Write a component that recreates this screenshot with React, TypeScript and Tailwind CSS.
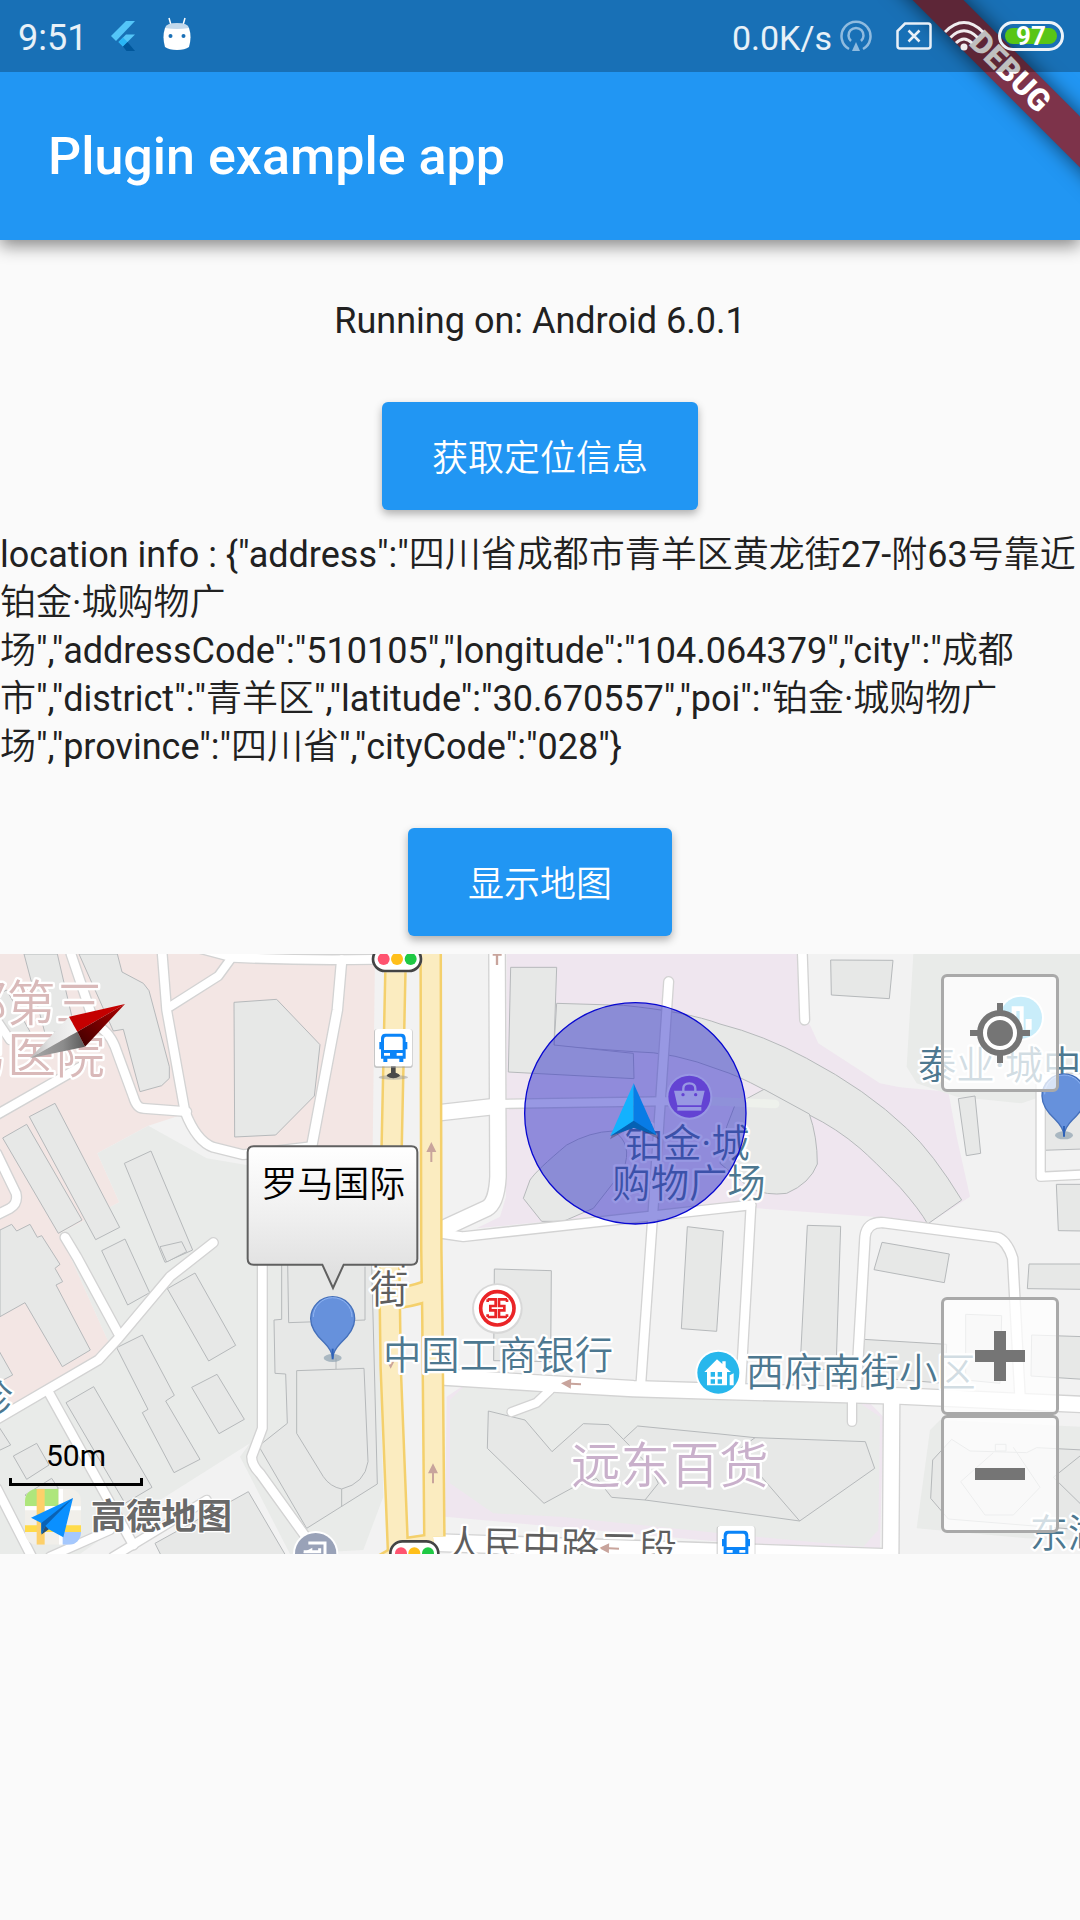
import React from "react";

const CJK = "font-[Roboto,'Noto_Sans_CJK_SC_DemiLight','Noto_Sans_CJK_SC_Light','Noto_Sans_CJK_SC',sans-serif]";

const LOCATION_INFO = [
  'location info : {"address":"四川省成都市青羊区黄龙街27-附63号靠近',
  "铂金·城购物广",
  '场","addressCode":"510105","longitude":"104.064379","city":"成都',
  '市","district":"青羊区","latitude":"30.670557","poi":"铂金·城购物广',
  '场","province":"四川省","cityCode":"028"}',
].join("\n");

const AREAS: [string, string][] = [
  ["#f3e6e4", "0,12 1125,12 1118,600 720,600 630,590 560,490 445,527 292,610 358,757 180,850 325,1175 40,1360 0,1400"],
  ["#e9ebe9", "445,527 620,625 740,645 1125,640 1150,1640 1090,1800 870,1812 720,1520 750,1480 370,1720 240,1812 0,1812 0,1400 325,1175 180,850 358,757 292,610"],
  ["#f3e6e4", "0,1100 75,1058 187,1250 271,1200 188,995 168,900 185,890 325,1175 295,1225 0,1400"],
  ["#efe6ef", "1520,12 2390,12 2400,200 2430,225 2455,280 2640,400 2700,412 2845,425 2870,560 2910,740 2780,825 2620,800 2270,775 1900,790 1430,835 1500,800 1518,740"],
  ["#efe6ef", "1340,1340 1400,1300 2600,1350 2650,1400 2640,1800 2160,1775 1335,1700"],
  ["#e9ebe9", "1350,1350 1390,1310 2580,1360 2640,1400 2635,1740 2590,1790 2160,1750 1680,1700 1480,1690 1350,1600"],
  ["#e9ebe9", "2740,12 3240,12 3240,400 3065,460 2870,440 2750,400 2720,350"],
  ["#e9ebe9", "2790,1440 2820,1410 3240,1430 3240,1770 3080,1765 2750,1735"],
];

const BUILDINGS = [
  "72,12 172,12 225,240 135,250",
  "0,130 20,120 90,245 30,270 0,220",
  "237,12 352,12 366,66 430,100 447,122 508,350 508,385 485,407 420,425 370,238 340,243",
  "702,157 830,148 960,284 943,438 827,555 704,561",
  "8,564 80,523 246,810 175,850",
  "88,500 165,460 359,832 287,869",
  "373,640 453,603 578,900 495,937",
  "305,902 375,867 449,1028 383,1065",
  "0,840 35,823 50,843 90,823 112,862 125,857 180,943 165,955 188,995 168,1005 271,1200 187,1250 75,1058 0,1100",
  "-10,1190 38,1275 -10,1300",
  "480,890 545,875 560,905 500,936",
  "502,1016 585,969 707,1186 626,1233",
  "350,1193 427,1155 523,1336 497,1353 600,1528 522,1568 427,1388 444,1378",
  "198,1358 281,1310 456,1612 375,1660",
  "575,1312 651,1273 733,1408 657,1451",
  "40,1518 110,1480 147,1545 80,1588",
  "-10,1420 32,1485 -10,1505",
  "75,1635 155,1585 175,1615 100,1660",
  "465,1780 745,1625 865,1830 490,1830",
  "845,940 845,1108 822,1110 825,1270 857,1272 862,1420 776,1488 920,1735 1132,1602 1115,940",
  "1532,52 1670,52 1662,285 1900,310 1902,386 1525,366",
  "2492,30 2679,31 2668,146 2494,135",
  "2875,446 2925,438 2942,610 2899,617",
  "3135,480 3250,470 3250,597 3127,601",
  "3169,703 3250,703 3250,843 3175,842",
  "2422,826 2522,829 2508,1260 2400,1255",
  "2646,877 2848,912 2833,998 2622,959",
  "3087,942 3250,942 3250,1018 3082,1016",
  "2590,1168 2840,1183 2835,1300 2588,1280",
  "2897,1093 3005,1097 3000,1300 2897,1290",
  "3095,1155 3250,1160 3250,1288 3093,1278",
  "1483,957 1654,962 1652,1235 1481,1232",
  "2062,830 2170,843 2150,1144 2044,1136",
  "1465,1383 1575,1410 1656,1505 1750,1421 1827,1424 1870,1468 1913,1428 2160,1452 2265,1463 2596,1475 2624,1555 2399,1713 2160,1680 1935,1650 1835,1642 1790,1585 1720,1612 1632,1660 1462,1495",
  "2798,1530 2855,1468 2910,1503 3080,1508 3110,1493 3250,1500 3250,1740 2845,1707 2792,1645",
];

const BUILDING_CURVES = [
  "M1670 160L1870 166Q2060 185 2160 222Q2290 255 2420 325Q2600 420 2720 535Q2800 610 2885 750L2783 822Q2760 780 2700 712Q2620 630 2580 595Q2510 535 2428 495L2290 418Q2210 375 2160 360Q2020 305 1900 305L1662 288Z",
  "M1570 745L1590 690Q1610 660 1700 585Q1770 545 1840 543Q1900 580 1870 660L1780 775L1690 814H1625Z",
  "M2160 640L2180 530L2205 465L2292 418L2428 492Q2452 560 2452 642Q2430 700 2360 730Q2300 738 2250 715Z",
];

const DETAIL_LINES = [
  "M863 940L866 1118L1095 1110V950",
  "M890 1262L1092 1255L1104 1535Q1095 1600 1025 1617Q990 1610 970 1580L890 1450Z",
  "M1025 1617V1670M1008 1225V1257",
  "M1870 1468L1950 1550L1975 1600L1935 1650M2265 1463L2215 1500L2399 1713",
  "M2980 1508L2882 1595L2955 1695H3040L3120 1612L3040 1492M2986 1483H3018V1503H2986ZM3250 1510L3160 1582L3250 1670",
];

const ROADS: [string, number][] = [
  ["M213 12L285 225Q325 240 345 290L400 440Q410 475 430 475L560 485", 26],
  ["M485 -10L500 180L555 485Q590 575 640 592L730 614L935 590", 26],
  ["M-20 500L240 352", 26],
  ["M-10 210L30 270", 24],
  ["M510 170L655 78L690 30", 24],
  ["M580 -10L700 22Q900 32 1120 28", 26],
  ["M1025 30L1012 180L935 590", 28],
  ["M-10 610L48 730Q55 760 30 775L-10 795", 26],
  ["M195 862L230 920L355 1150", 26],
  ["M640 878L510 980L355 1165L295 1230L-10 1408", 26],
  ["M145 1325L400 1785", 26],
  ["M-10 1615L100 1830", 26],
  ["M620 1650L340 1820M330 1740L150 1820", 24],
  ["M787 940V1435L755 1520Q755 1545 780 1570L960 1820", 26],
  ["M1320 488L1480 470", 46],
  ["M1490 462L2100 452", 24],
  ["M1491 -20L1494 680Q1490 760 1460 775L1320 840", 46],
  ["M1320 850L1390 860L2160 775L2253 765", 26],
  ["M2253 765L2240 1000L2222 1310", 26],
  ["M2006 95L1985 400L1958 800L1922 1310", 26],
  ["M1310 1280L1660 1302L1900 1316L2160 1324L2700 1338L3260 1364", 46],
  ["M1650 1320L1610 1358L1535 1386", 24],
  ["M2406 -20L2414 210", 26],
  ["M2568 1330L2595 860Q2600 815 2650 818L2990 862Q3020 870 3038 925L3060 1340", 28],
  ["M3260 385H3122V680L3260 673", 24],
  ["M2675 1340L2672 1830", 46],
  ["M2556 1350V1415", 24],
  ["M1310 1778L2160 1806L2650 1822", 50],
];

const YELLOW_ROADS = [
  "M1188 -20L1175 590L1168 950L1172 1250L1195 1830",
  "M1292 -20L1294 900L1297 1100L1303 1760",
  "M1172 1045Q1220 1045 1290 1020",
  "M1195 1798L1302 1782",
  "M1200 1815L1120 1860",
];

function TrafficLight({ x, y }: { x: number; y: number }) {
  return (
    <g transform={`translate(${x} ${y})`}>
      <rect x="-76" y="-40" width="152" height="80" rx="40" fill="#fff" />
      <rect x="-72" y="-36" width="144" height="72" rx="36" fill="#fff" stroke="#444" strokeWidth="8" />
      <circle cx="-40" r="18" fill="#ff5470" />
      <circle r="18" fill="#ffbf1a" />
      <circle cx="41" r="18" fill="#1fc944" />
    </g>
  );
}

function BusStop({ x, y, pole }: { x: number; y: number; pole?: boolean }) {
  return (
    <g transform={`translate(${x} ${y})`}>
      {pole && (
        <>
          <ellipse cy="88" rx="44" ry="7" fill="#999" opacity=".5" />
          <path d="M-7 50H7V74Q20 78 20 84Q0 98 -20 84Q-20 78 -7 74Z" fill="#4a4a4a" />
        </>
      )}
      <rect x="-58" y="-56" width="116" height="116" rx="8" fill="#999" opacity=".5" />
      <rect x="-55" y="-57" width="111" height="112" rx="8" fill="#fff" />
      <path
        fillRule="evenodd"
        fill="#0a84f8"
        d="M-24 -43H24Q36 -43 37 -30V-18H42V4H37V32H30V42H18V32H-18V42H-30V32H-37V4H-42V-18H-37V-30Q-36 -43 -24 -43ZM-22 -34Q-28 -34 -28 -26V6H28V-26Q28 -34 22 -34ZM-28 15V23H-10V15ZM10 15V23H28V15Z"
      />
    </g>
  );
}

function MapPin({ x, y }: { x: number; y: number }) {
  return (
    <g transform={`translate(${x} ${y})`}>
      <ellipse cy="118" rx="27" ry="12" fill="#8fa3b0" opacity=".7" />
      <path
        d="M0 118Q-2 95 -25 72Q-66 35 -66 0A66 66 0 0 1 66 0Q66 35 25 72Q2 95 0 118Z"
        fill="#6691dc"
        stroke="#4570ba"
        strokeWidth="4"
      />
      <path d="M-58 -5A58 58 0 0 1 58 -5" fill="none" stroke="#8fb4f2" strokeWidth="3" />
      <path d="M0 90V122" stroke="#2e62b8" strokeWidth="6" />
    </g>
  );
}

function DirectionArrow({ x, y, turn }: { x: number; y: number; turn: number }) {
  return (
    <path
      transform={`translate(${x} ${y}) rotate(${turn})`}
      d="M0 -30L15 0H3V30H-3V0H-15Z"
      fill="#c8a49c"
    />
  );
}

function CityMap() {
  return (
    <svg
      className="block h-[600px] w-full"
      viewBox="0 12 3240 1800"
      preserveAspectRatio="xMidYMid slice"
      role="img"
      aria-label="Map"
    >
      <defs>
        <linearGradient id="bubble" x1="0" y1="0" x2="0" y2="1">
          <stop offset="0" stopColor="#ffffff" />
          <stop offset=".5" stopColor="#efefef" />
          <stop offset="1" stopColor="#dcdcdc" />
        </linearGradient>
        <linearGradient id="silver" x1="0" y1="0" x2="1" y2="0">
          <stop offset="0" stopColor="#b4b4b4" />
          <stop offset=".4" stopColor="#e2e2e2" />
          <stop offset="1" stopColor="#f4f4f4" />
        </linearGradient>
        <linearGradient id="steel" x1="0" y1="0" x2="1" y2="0">
          <stop offset="0" stopColor="#a8a8a8" />
          <stop offset=".6" stopColor="#8c8c8c" />
          <stop offset="1" stopColor="#5a5a5a" />
        </linearGradient>
        <linearGradient id="darkred" x1="1" y1="0" x2="0" y2="1">
          <stop offset="0" stopColor="#b00000" />
          <stop offset="1" stopColor="#3c0000" />
        </linearGradient>
      </defs>

      <rect y="12" width="3240" height="1800" fill="#f2f2f2" />
      {AREAS.map(([fill, points]) => (
        <polygon key={points} points={points} fill={fill} />
      ))}
      <g fill="#e7e8e7" stroke="#b6b9bb" strokeWidth="3">
        {BUILDING_CURVES.map((d) => (
          <path key={d} d={d} />
        ))}
        {BUILDINGS.map((points) => (
          <polygon key={points} points={points} />
        ))}
      </g>
      <g fill="none" stroke="#b6b9bb" strokeWidth="3">
        {DETAIL_LINES.map((d) => (
          <path key={d} d={d} />
        ))}
      </g>
      <path d="M2100 452L2325 462" stroke="#eef1ec" strokeWidth="26" strokeLinecap="round" />

      <g fill="none" stroke="#d3d3d3" strokeLinecap="round" strokeLinejoin="round">
        {ROADS.map(([d, w]) => (
          <path key={d} d={d} strokeWidth={w + 8} />
        ))}
      </g>
      <g fill="none" stroke="#ffffff" strokeLinecap="round" strokeLinejoin="round">
        {ROADS.map(([d, w]) => (
          <path key={d} d={d} strokeWidth={w} />
        ))}
      </g>
      <g fill="none" stroke="#f4d06c" strokeWidth="68">
        {YELLOW_ROADS.map((d) => (
          <path key={d} d={d} />
        ))}
      </g>
      <g fill="none" stroke="#fbecc0" strokeWidth="53">
        {YELLOW_ROADS.map((d) => (
          <path key={d} d={d} />
        ))}
      </g>

      <DirectionArrow x={1294} y={606} turn={0} />
      <DirectionArrow x={1299} y={1570} turn={0} />
      <DirectionArrow x={1172} y={1226} turn={180} />
      <DirectionArrow x={1713} y={1301} turn={-87} />
      <DirectionArrow x={1827} y={1795} turn={-88} />
      <path d="M1478 14H1505M1491 14V45" stroke="#c8a49c" strokeWidth="7" />

      <TrafficLight x={1191} y={27} />
      <TrafficLight x={1243} y={1810} />
      <BusStop x={1180} y={294} pole />
      <BusStop x={2208} y={1785} />

      <g stroke="#fff" strokeWidth="14" strokeLinejoin="round" paintOrder="stroke">
        <g fill="#d9b9b9" fontSize="146">
          <text x="-126" y="214">都第三</text>
          <text x="-124" y="368">男医院</text>
        </g>
        <text x="1714" y="1600" fontSize="148" fill="#c9b0cb">远东百货</text>
        <g fill="#4d7890" fontSize="115">
          <text x="1149" y="1257">中国工商银行</text>
          <text x="2237" y="1308">西府南街小区</text>
          <text x="1874" y="622">铂金·城</text>
          <text x="1837" y="742">购物广场</text>
          <text x="2754" y="386">泰业·城中心</text>
          <text x="3089" y="1790">东湖</text>
          <text x="-76" y="1388">诊</text>
        </g>
        <g fill="#5e5e5e" fontSize="116">
          <text x="1110" y="942">西</text>
          <text x="1110" y="1058">街</text>
          <text x="1334" y="1824" transform="rotate(1 1334 1824)">人民中路二段</text>
        </g>
      </g>

      <g>
        <circle cx="1492" cy="1076" r="76" fill="#d8d8d8" />
        <circle cx="1492" cy="1075" r="70" fill="#fff" />
        <circle cx="1492" cy="1075" r="50" fill="#fff" stroke="#ea2427" strokeWidth="11" />
        <path
          d="M1463 1048H1487V1068H1471V1081H1487V1101H1463M1521 1048H1497V1068H1513V1081H1497V1101H1521M1463 1048V1056M1521 1048V1056M1463 1101V1093M1521 1101V1093"
          fill="none"
          stroke="#ea2427"
          strokeWidth="8"
        />
      </g>
      <g transform="translate(2155 1268)">
        <circle r="69" fill="#fff" />
        <circle r="63" fill="#28b7ec" />
        <path
          fillRule="evenodd"
          fill="#fff"
          d="M-4 -40L12 -26V-34H22V-16L38 -2H26V38H-34V-2H-42ZM-23 -2V12H-10V-2ZM-2 -2V12H11V-2ZM-23 20V33H-10V20ZM-2 20V33H11V20Z"
        />
        <path d="M34 38V8L46 2V38Z" fill="#fff" />
      </g>
      <g transform="translate(3063 203)">
        <circle r="69" fill="#fff" />
        <circle r="63" fill="#28b7ec" />
        <path d="M-28 36V-34H8V36H-4V-20H-14V36ZM14 36V4H32V36Z" fill="#fff" />
      </g>
      <g transform="translate(2068 440)">
        <circle r="69" fill="#fff" />
        <circle r="63" fill="#9a5ce0" />
        <path d="M-46 -18H46L36 26H-36Z" fill="#fff" />
        <path d="M-36 31H36V42H-36Z" fill="#fff" />
        <path d="M-18 -10V-24Q-18 -40 0 -40Q18 -40 18 -24V-10" fill="none" stroke="#fff" strokeWidth="7" />
        <circle cx="-19" cy="-6" r="5" fill="#9a5ce0" />
        <circle cx="19" cy="-6" r="5" fill="#9a5ce0" />
      </g>
      <g transform="translate(947 1811)">
        <circle r="68" fill="#fff" />
        <circle r="62" fill="#99a2b8" />
        <path d="M-22 -32H28V20M-36 -6H12V-16" fill="none" stroke="#fff" strokeWidth="9" />
        <path d="M-38 -3L-10 -18V-3Z" fill="#fff" />
      </g>

      <circle cx="1906" cy="490" r="332" fill="#2828c4" fillOpacity=".48" stroke="#0808d0" strokeWidth="4" />
      <g>
        <path d="M1901 412L1976 568L1901 528L1830 568Z" fill="#000" opacity=".25" />
        <path d="M1901 400L1831 558L1901 515Z" fill="#13b2fe" />
        <path d="M1901 400L1970 556L1901 515Z" fill="#087ce6" />
        <path d="M1831 558L1901 512L1970 556L1901 534Z" fill="#0561b4" />
      </g>

      <MapPin x={998} y={1106} />
      <MapPin x={3192} y={438} />

      <path
        d="M761 589H1234Q1252 589 1252 607V926Q1252 944 1234 944H1031L999 1014L967 944H761Q743 944 743 926V607Q743 589 761 589Z"
        fill="url(#bubble)"
        stroke="#606060"
        strokeWidth="6"
      />
      <text x="784" y="742" fontSize="108" fill="#000">罗马国际</text>

      <path d="M207 200L90 325L232 245Z" fill="url(#silver)" />
      <path d="M232 245L90 325L255 290Z" fill="url(#steel)" />
      <path d="M207 200L375 162L232 245Z" fill="#c40000" />
      <path d="M232 245L375 162L255 290Z" fill="url(#darkred)" />

      <g>
        <clipPath id="tile">
          <rect x="75" y="1616" width="168" height="168" rx="36" />
        </clipPath>
        <g clipPath="url(#tile)">
          <rect x="75" y="1616" width="168" height="168" fill="#f1efea" />
          <path d="M75 1616H175V1668H75Z" fill="#aee67c" />
          <path d="M183 1616V1784M75 1675H243" stroke="#fff" strokeWidth="12" />
          <path d="M75 1736H243" stroke="#ffdb4a" strokeWidth="20" />
          <path d="M122 1616V1784" stroke="#fdd06a" strokeWidth="24" />
          <path d="M188 1784V1746H243V1784Z" fill="#a5c8fd" />
        </g>
        <path d="M219 1644L93 1703L124 1719V1752L146 1738L190 1762Z" fill="#0a90ff" />
        <path d="M219 1644L124 1719V1752L136 1728Z" fill="#0a62b4" />
        <path d="M136 1728L146 1738L124 1754Z" fill="#2b4f70" />
      </g>
      <text
        x="272"
        y="1738"
        className="font-['Noto_Sans_CJK_SC',sans-serif]"
        fontSize="106"
        fontWeight="700"
        fill="#696969"
        stroke="#fff"
        strokeWidth="8"
        paintOrder="stroke"
        strokeLinejoin="round"
      >
        高德地图
      </text>
    </svg>
  );
}

const MAP_BUTTON =
  "flex size-[118px] items-center justify-center rounded-md border-3 border-[#a9a9a9] bg-white/75";

function MapPanel() {
  return (
    <section className="relative w-full overflow-hidden">
      <CityMap />
      <div className="absolute bottom-[68px] left-[9px] flex w-[134px] flex-col items-center text-[30px] leading-[36px] text-black">
        <span className="pb-1">50m</span>
        <span className="h-2 w-full border-x-3 border-b-3 border-black" />
      </div>
      <button type="button" aria-label="My location" className={`${MAP_BUTTON} absolute top-5 right-[21px]`}>
        <svg viewBox="0 0 60 60" className="size-[60px]">
          <circle cx="30" cy="30" r="20" fill="#fff" stroke="#757575" strokeWidth="6" />
          <circle cx="30" cy="30" r="13" fill="#757575" />
          <path d="M30 0V9M30 51V60M0 30H9M51 30H60" stroke="#757575" strokeWidth="6" />
        </svg>
      </button>
      <div className="absolute right-[21px] bottom-[21px] flex flex-col">
        <button type="button" aria-label="Zoom in" className={MAP_BUTTON}>
          <svg viewBox="0 0 50 50" className="size-[50px]">
            <path d="M0 25H50M25 0V50" stroke="#757575" strokeWidth="12" />
          </svg>
        </button>
        <button type="button" aria-label="Zoom out" className={MAP_BUTTON}>
          <svg viewBox="0 0 50 50" className="size-[50px]">
            <path d="M0 25H50" stroke="#757575" strokeWidth="12" />
          </svg>
        </button>
      </div>
    </section>
  );
}

function StatusBar() {
  return (
    <div className="relative z-20 flex h-18 items-center justify-between bg-black/25 pr-4 pl-[18px] leading-[48px] text-white/90">
      <div className="flex items-center gap-6">
        <span className="pt-1 text-[36px]">9:51</span>
        <svg viewBox="0 0 24 30" className="h-[30px] w-6">
          <path d="M15 0H24L5 20L0 15Z" fill="#54c5f8" />
          <path d="M15 13.500H24L12 25.500L7.500 21Z" fill="#54c5f8" />
          <path d="M7.500 21L12 16.500L16.500 21L12 25.500Z" fill="#29b6f6" />
          <path d="M12 25.500L16.500 21L24 30H15.500Z" fill="#01579b" />
        </svg>
        <svg viewBox="0 0 28 34" className="mb-1 ml-1 h-[34px] w-7">
          <path d="M6 1L8 8M22 1L20 8" stroke="#fff" strokeWidth="1.500" />
          <path d="M2 11Q14 8 26 11Q29 20 26 30Q22 33 14 33Q6 33 2 30Q-1 20 2 11Z" fill="#fff" />
          <path d="M2 11Q3 6 14 6Q25 6 26 11Q14 13 2 11Z" fill="#c3d9ec" />
          <circle cx="7.500" cy="19" r="2" fill="#1a70b6" />
          <circle cx="20.500" cy="19" r="2" fill="#1a70b6" />
        </svg>
      </div>
      <div className="flex items-center">
        <span className="pt-1 pr-2 text-[34px]">0.0K/s</span>
        <svg viewBox="0 0 32 32" className="size-8" fill="none" stroke="#8fbbdf" strokeWidth="2.500">
          <path d="M9 29A14.500 14.500 0 1 1 23 29" />
          <path d="M11 21A7.500 7.500 0 1 1 21 21" />
          <path d="M16 22L20 31H12Z" fill="#8fbbdf" stroke="none" />
        </svg>
        <svg viewBox="0 0 36 28" className="ml-6 h-7 w-9" fill="none" stroke="#e8f0f8">
          <path d="M9 1.500H32Q34.500 1.500 34.500 4V24Q34.500 26.500 32 26.500H4Q1.500 26.500 1.500 24V9Z" strokeWidth="2.500" />
          <path d="M12.500 8.500L23.500 19.500M23.500 8.500L12.500 19.500" strokeWidth="2.500" />
        </svg>
        <svg viewBox="0 0 40 30" className="ml-3 h-[30px] w-10" fill="none" stroke="#f0ecee" strokeWidth="3">
          <path d="M1 11Q20 -8 39 11" />
          <path d="M6.500 16.500Q20 3 33.500 16.500" />
          <path d="M12 22Q20 14 28 22" />
          <circle cx="20" cy="26" r="3.500" fill="#f0ecee" stroke="none" />
        </svg>
        <div className="ml-[14px] flex h-[30px] w-[66px] rounded-full border-3 border-[#edf3f9] p-1">
          <span className="flex flex-1 items-center justify-center rounded-full bg-[#58c516] text-[26px] leading-none font-bold text-white">
            97
          </span>
        </div>
      </div>
    </div>
  );
}

const RAISED =
  "h-[108px] rounded-md bg-[#2196f3] px-[50px] pt-1.5 text-white shadow-[0_4px_8px_rgba(0,0,0,0.3)]";

export default function App() {
  return (
    <div className={`min-h-screen bg-[#fafafa] text-[36px] leading-[48px] text-[#212121] ${CJK}`}>
      <header className="relative z-10 bg-[#2196f3] shadow-[0_6px_16px_rgba(0,0,0,0.45)]">
        <div className="pointer-events-none absolute top-0 right-0 z-10 size-[240px] overflow-hidden">
          <div className="absolute top-[54px] -right-[80px] h-9 w-[300px] rotate-45 bg-[#7d334a] text-center text-[31px] leading-[36px] font-black text-white shadow-[0_0_20px_rgba(0,0,0,0.6)]">
            DEBUG
          </div>
        </div>
        <StatusBar />
        <div className="flex h-[168px] items-center px-12 pt-0.5">
          <h1 className="text-[52px] leading-[60px] font-medium text-white">Plugin example app</h1>
        </div>
      </header>
      <main className="flex flex-col items-center pt-[57px]">
        <p>Running on: Android 6.0.1</p>
        <button type="button" className={`${RAISED} mt-[57px]`}>
          获取定位信息
        </button>
        <p className="mt-[21px] w-full whitespace-pre-line">{LOCATION_INFO}</p>
        <button type="button" className={`${RAISED} mt-[57px] min-w-[264px]`}>
          显示地图
        </button>
        <div className="mt-[18px] w-full">
          <MapPanel />
        </div>
      </main>
    </div>
  );
}
